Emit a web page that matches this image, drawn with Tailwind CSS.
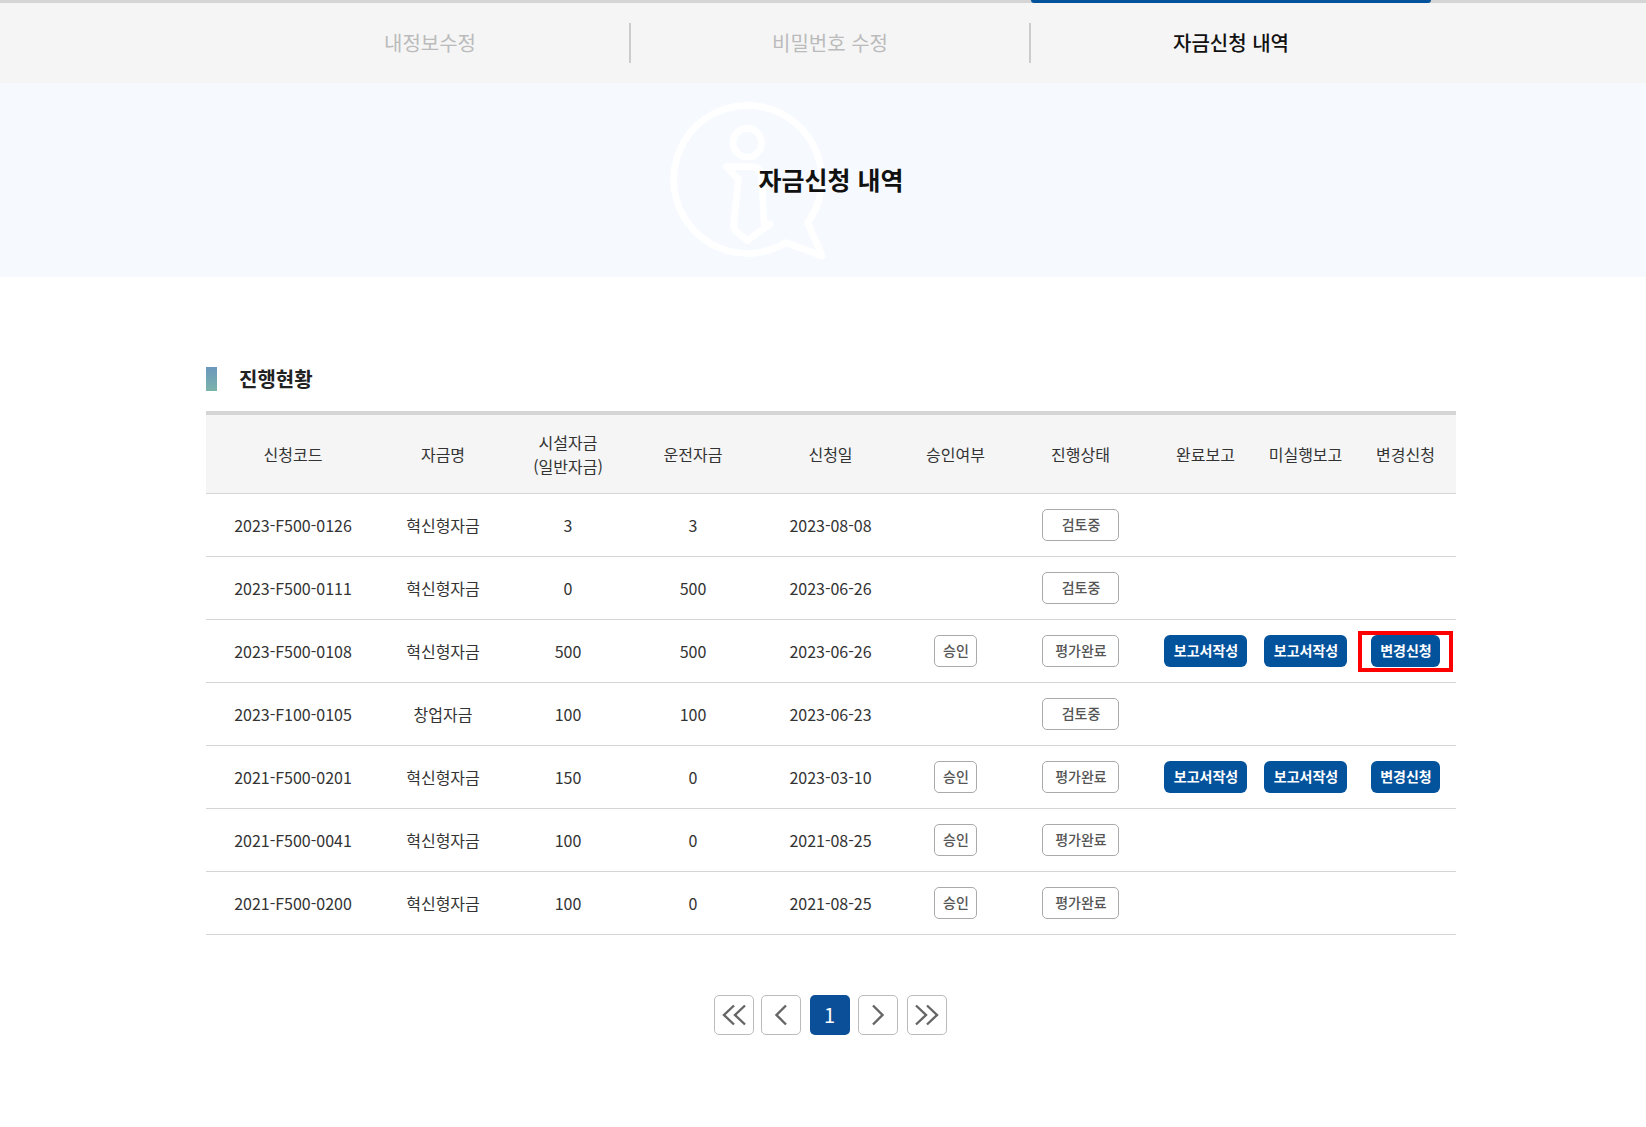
<!DOCTYPE html>
<html lang="ko" class="overflow-hidden">
<head>
    <meta charset="UTF-8">
    <title>자금신청 내역</title>
    <script src="https://cdn.jsdelivr.net/npm/@tailwindcss/browser@4"></script>
</head>
<body class="bg-white overflow-hidden font-['Noto_Sans_CJK_KR','Noto_Sans',sans-serif] text-[#333]">
<div class="w-[1662px]">

    <!-- tabs -->
    <nav class="h-[83px] bg-[#f5f5f5] border-t-[3px] border-[#d5d5d5] flex justify-center">
        <a class="w-[400px] h-[80px] flex items-center justify-center">
            <span class="w-full h-[40px] flex items-center justify-center border-r-2 border-[#ccc] text-[20px] text-[#bbb]">내정보수정</span>
        </a>
        <a class="w-[400px] h-[80px] flex items-center justify-center">
            <span class="w-full h-[40px] flex items-center justify-center border-r-2 border-[#ccc] text-[20px] text-[#bbb]">비밀번호 수정</span>
        </a>
        <a class="relative w-[400px] h-[80px] flex items-center justify-center text-[20px] font-medium text-[#111]">
            <span class="absolute left-0 right-0 top-[-3px] h-[3px] bg-[#03529c] rounded-b-[3px]"></span>
            자금신청 내역
        </a>
    </nav>

    <!-- title -->
    <header class="relative h-[194px] bg-[#f6faff] flex items-center justify-center">
        <svg class="absolute left-[660px] top-[9px] w-[180px] h-[180px]" viewBox="0 0 540 540" fill="none" stroke="#fff" stroke-width="20" stroke-linejoin="round" stroke-linecap="round">
            <path d="M378 452A222 222 0 1 1 443 392L487 492Z"/>
            <circle cx="262" cy="152" r="43"/>
            <path d="M200 224H272Q300 224 305 250L312 396H330L262 446L232 422Q220 412 221 395L235 262Z"/>
        </svg>
        <h1 class="relative text-[25px] font-bold text-[#111]">자금신청 내역</h1>
    </header>

    <main class="w-[1250px] mx-auto pt-[90px]">
        <h2 class="h-[24px] flex items-center gap-[22px] text-[20px] font-bold text-[#222]">
            <span class="w-[11px] h-[24px] bg-gradient-to-b from-[#6b97bd] to-[#7ab3a9]"></span>
            진행현황
        </h2>

        <table class="mt-[20px] w-full table-fixed border-collapse text-[16px] text-center border-t-4 border-[#d5d5d5] [&_th]:pr-[1px] [&_td]:pr-[1px] [&_td:has(>*)]:pr-[2px] [&_td>*]:pl-[2px]">
            <colgroup>
                <col class="w-[175px]"><col class="w-[125px]"><col class="w-[125px]"><col class="w-[125px]"><col class="w-[150px]">
                <col class="w-[100px]"><col class="w-[150px]"><col class="w-[100px]"><col class="w-[100px]"><col class="w-[100px]">
            </colgroup>
            <thead>
                <tr class="h-[80px] bg-[#f5f5f5] border-b border-[#d5d5d5] font-normal">
                    <th class="font-normal">신청코드</th>
                    <th class="font-normal">자금명</th>
                    <th class="font-normal leading-[24px]">시설자금<br>(일반자금)</th>
                    <th class="font-normal">운전자금</th>
                    <th class="font-normal">신청일</th>
                    <th class="font-normal">승인여부</th>
                    <th class="font-normal">진행상태</th>
                    <th class="font-normal">완료보고</th>
                    <th class="font-normal">미실행보고</th>
                    <th class="font-normal">변경신청</th>
                </tr>
            </thead>
            <tbody>
                <tr class="h-[63px] border-b border-[#d5d5d5]">
                    <td>2023-F500-0126</td><td>혁신형자금</td><td>3</td><td>3</td><td>2023-08-08</td>
                    <td></td>
                    <td><span class="inline-flex w-[77px] h-[32px] items-center justify-center border border-[#aaa] rounded-[5px] text-[14px] font-medium text-[#555]">검토중</span></td>
                    <td></td><td></td><td></td>
                </tr>
                <tr class="h-[63px] border-b border-[#d5d5d5]">
                    <td>2023-F500-0111</td><td>혁신형자금</td><td>0</td><td>500</td><td>2023-06-26</td>
                    <td></td>
                    <td><span class="inline-flex w-[77px] h-[32px] items-center justify-center border border-[#aaa] rounded-[5px] text-[14px] font-medium text-[#555]">검토중</span></td>
                    <td></td><td></td><td></td>
                </tr>
                <tr class="h-[63px] border-b border-[#d5d5d5]">
                    <td>2023-F500-0108</td><td>혁신형자금</td><td>500</td><td>500</td><td>2023-06-26</td>
                    <td><span class="inline-flex w-[43px] h-[32px] items-center justify-center border border-[#aaa] rounded-[5px] text-[14px] font-medium text-[#555]">승인</span></td>
                    <td><span class="inline-flex w-[77px] h-[32px] items-center justify-center border border-[#aaa] rounded-[5px] text-[14px] font-medium text-[#555]">평가완료</span></td>
                    <td><a class="inline-flex w-[83px] h-[32px] items-center justify-center rounded-[6px] bg-[#03529c] text-[14px] font-bold text-white">보고서작성</a></td>
                    <td><a class="inline-flex w-[83px] h-[32px] items-center justify-center rounded-[6px] bg-[#03529c] text-[14px] font-bold text-white">보고서작성</a></td>
                    <td class="relative">
                        <a class="inline-flex w-[69px] h-[32px] items-center justify-center rounded-[6px] bg-[#03529c] text-[14px] font-bold text-white">변경신청</a>
                        <span class="absolute left-[2px] top-[11px] w-[95px] h-[41px] border-4 border-[#f00]"></span>
                    </td>
                </tr>
                <tr class="h-[63px] border-b border-[#d5d5d5]">
                    <td>2023-F100-0105</td><td>창업자금</td><td>100</td><td>100</td><td>2023-06-23</td>
                    <td></td>
                    <td><span class="inline-flex w-[77px] h-[32px] items-center justify-center border border-[#aaa] rounded-[5px] text-[14px] font-medium text-[#555]">검토중</span></td>
                    <td></td><td></td><td></td>
                </tr>
                <tr class="h-[63px] border-b border-[#d5d5d5]">
                    <td>2021-F500-0201</td><td>혁신형자금</td><td>150</td><td>0</td><td>2023-03-10</td>
                    <td><span class="inline-flex w-[43px] h-[32px] items-center justify-center border border-[#aaa] rounded-[5px] text-[14px] font-medium text-[#555]">승인</span></td>
                    <td><span class="inline-flex w-[77px] h-[32px] items-center justify-center border border-[#aaa] rounded-[5px] text-[14px] font-medium text-[#555]">평가완료</span></td>
                    <td><a class="inline-flex w-[83px] h-[32px] items-center justify-center rounded-[6px] bg-[#03529c] text-[14px] font-bold text-white">보고서작성</a></td>
                    <td><a class="inline-flex w-[83px] h-[32px] items-center justify-center rounded-[6px] bg-[#03529c] text-[14px] font-bold text-white">보고서작성</a></td>
                    <td><a class="inline-flex w-[69px] h-[32px] items-center justify-center rounded-[6px] bg-[#03529c] text-[14px] font-bold text-white">변경신청</a></td>
                </tr>
                <tr class="h-[63px] border-b border-[#d5d5d5]">
                    <td>2021-F500-0041</td><td>혁신형자금</td><td>100</td><td>0</td><td>2021-08-25</td>
                    <td><span class="inline-flex w-[43px] h-[32px] items-center justify-center border border-[#aaa] rounded-[5px] text-[14px] font-medium text-[#555]">승인</span></td>
                    <td><span class="inline-flex w-[77px] h-[32px] items-center justify-center border border-[#aaa] rounded-[5px] text-[14px] font-medium text-[#555]">평가완료</span></td>
                    <td></td><td></td><td></td>
                </tr>
                <tr class="h-[63px] border-b border-[#d5d5d5]">
                    <td>2021-F500-0200</td><td>혁신형자금</td><td>100</td><td>0</td><td>2021-08-25</td>
                    <td><span class="inline-flex w-[43px] h-[32px] items-center justify-center border border-[#aaa] rounded-[5px] text-[14px] font-medium text-[#555]">승인</span></td>
                    <td><span class="inline-flex w-[77px] h-[32px] items-center justify-center border border-[#aaa] rounded-[5px] text-[14px] font-medium text-[#555]">평가완료</span></td>
                    <td></td><td></td><td></td>
                </tr>
            </tbody>
        </table>

        <!-- paging -->
        <div class="mt-[60px] pr-[2px] flex justify-center">
            <a class="w-[40px] h-[40px] flex items-center justify-center border border-[#bbb] rounded-[5px]">
                <svg class="w-[26px] h-[22px]" viewBox="0 0 26 22" fill="none" stroke="#666" stroke-width="2.4"><path d="M13 1.5L3 11l10 9.5M24 1.5L14 11l10 9.5"/></svg>
            </a>
            <a class="ml-[7px] w-[40px] h-[40px] flex items-center justify-center border border-[#bbb] rounded-[5px]">
                <svg class="w-[14px] h-[22px]" viewBox="0 0 14 22" fill="none" stroke="#666" stroke-width="2.4"><path d="M12 1.5L2.5 11l9.5 9.5"/></svg>
            </a>
            <a class="ml-[9px] w-[40px] h-[40px] flex items-center justify-center rounded-[5px] bg-[#0b4f98] text-white text-[20px]">1</a>
            <a class="ml-[8px] w-[40px] h-[40px] flex items-center justify-center border border-[#bbb] rounded-[5px]">
                <svg class="w-[14px] h-[22px]" viewBox="0 0 14 22" fill="none" stroke="#666" stroke-width="2.4"><path d="M2 1.5l9.5 9.5L2 20.5"/></svg>
            </a>
            <a class="ml-[9px] w-[40px] h-[40px] flex items-center justify-center border border-[#bbb] rounded-[5px]">
                <svg class="w-[26px] h-[22px]" viewBox="0 0 26 22" fill="none" stroke="#666" stroke-width="2.4"><path d="M2 1.5L12 11 2 20.5M13 1.5L23 11l-10 9.5"/></svg>
            </a>
        </div>
    </main>
</div>
</body>
</html>
